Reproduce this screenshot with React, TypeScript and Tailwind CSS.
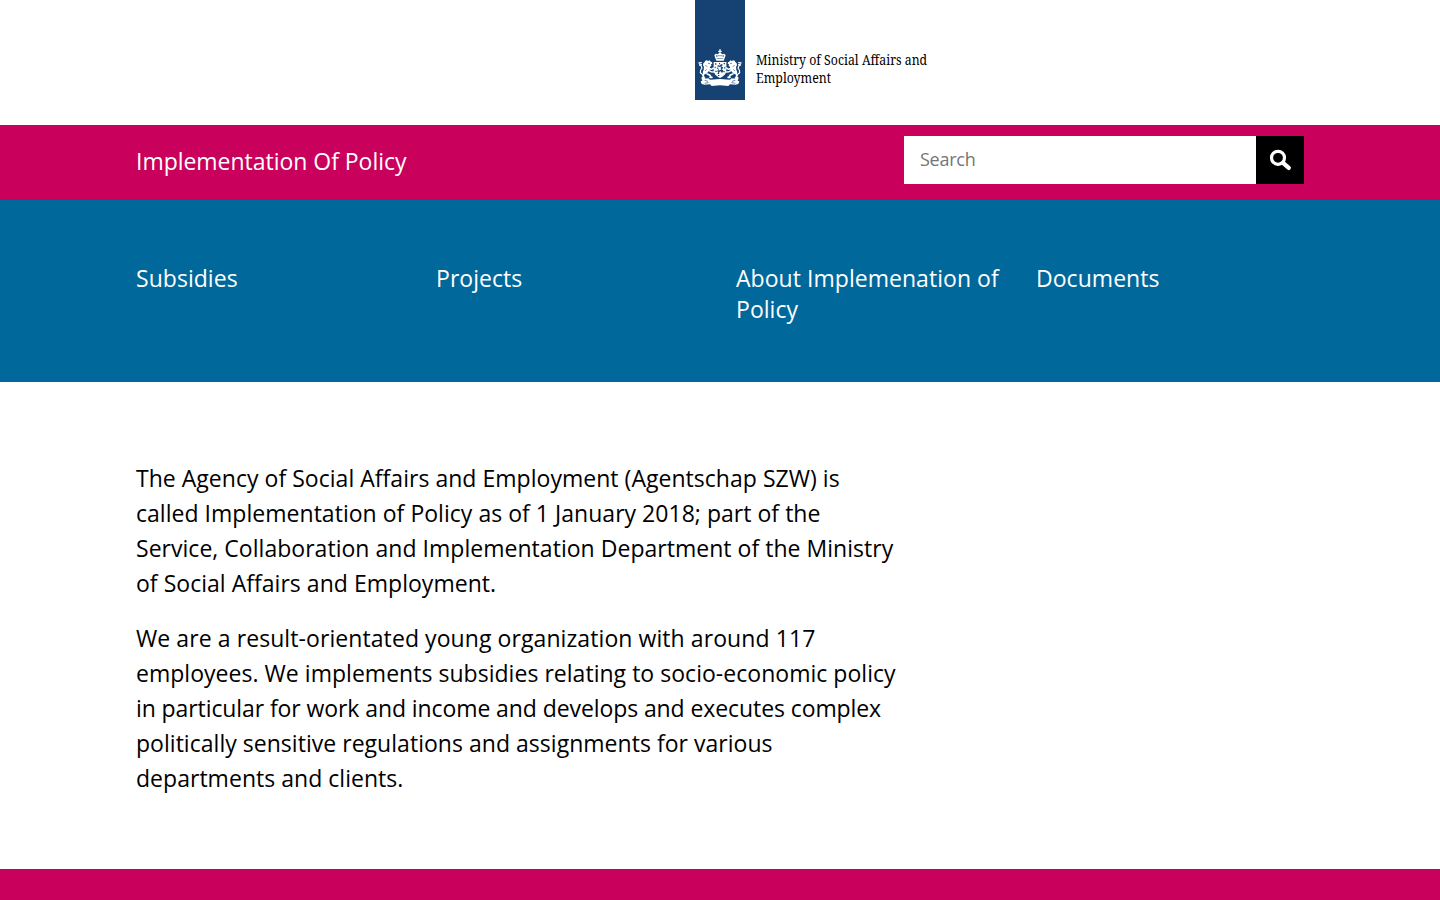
function CoatOfArms() {
  const lion = (
    <g>
      <path d="M50 61l5 2 4-2 3 4 4 2 1 4-4 2 1 5-5 3 2 5-5 7-6 8-9 2-3-6 3-8 1-8-3-5 1-6 4-4 2-4z" />
      <g fill="none" stroke="#fff" strokeLinecap="round" strokeLinejoin="round">
        <path d="M56 84l8 4 7-4M55 91l8 4 8 1" strokeWidth="4.5" />
        <path d="M52 102l8 4 3 6M60 112h6" strokeWidth="5" />
        <path d="M43 99l-4 7 3 8M37 114h6" strokeWidth="5.5" />
        <path d="M37 103l-6-5 1-8 4-6-3-7-3-4" strokeWidth="3.6" />
        <path d="M27 69l7-1M29 75l5-1" strokeWidth="4" />
      </g>
    </g>
  );
  return (
    <svg viewBox="15 0 150 186" className="h-[62px] w-[50px]" fill="#fff" aria-hidden="true">
      <path d="M88 28h4v4h3v4h-3v5h-4v-5h-3v-4h3z" />
      <path d="M73 45l5-4 5 2 4-4h6l4 4 5-2 5 4-2 7-4 10H79l-4-10z" />
      <g fill="#154273">
        <circle cx="80.5" cy="48" r="2.4" />
        <circle cx="86.8" cy="47" r="1.8" />
        <circle cx="93.2" cy="47" r="1.8" />
        <circle cx="99.5" cy="48" r="2.4" />
        <path d="M80 55h20v1.5H80z" />
      </g>
      {lion}
      <g transform="translate(180 0) scale(-1 1)">{lion}</g>
      <g fill="none" stroke="#154273" strokeWidth="1.8">
        <path d="M54 70l6 1M46 76l6 4M50 88l-5 5" />
        <path d="M126 70l-6 1M134 76l-6 4M130 88l5 5" />
      </g>
      <path d="M71 66h38v23c0 12-7 19-19 25-12-6-19-13-19-25z" />
      <g fill="#154273">
        <path d="M75 70h4v4h-4zM87 69h3v4h-3zM101 69h4v4h-4zM74 80h3v5h-3zM103 80h3v6h-3zM76 92h4v4h-4zM100 93h4v4h-4zM84 105h4v3h-4z" />
        <path d="M82 77l5-2 2 3 4-6 6 3-5 4 6 4-4 5 4 4-3 6-4-1-1-4-4 3-1 7-5-2 3-5-4-3 5-4-6-4 4-3z" />
      </g>
      <path d="M86 79l4 3 4-4-2 6 2 6-4-1-4 5 1-7-4-2z" />
      <path d="M35 117l20-2 5 4 30-2 30 2 5-4 20 2-2 5 5 2-3 8-9 2-16-1-5 5-25-2-25 2-5-5-16 1-9-2-3-8 5-2z" />
      <path d="M44 121l10 3M136 121l-10 3M44 130l12-2M136 130l-12-2" stroke="#154273" strokeWidth="1.8" />
    </svg>
  );
}

const intro = [
  "The Agency of Social Affairs and Employment (Agentschap SZW) is",
  "called Implementation of Policy as of 1 January 2018; part of the",
  "Service, Collaboration and Implementation Department of the Ministry",
  "of Social Affairs and Employment.",
];

export default function App() {
  return (
    <div className="flex h-[900px] flex-col overflow-hidden bg-white font-['Open_Sans',sans-serif] text-[23px] text-black">
      <header className="flex h-[125px] shrink-0 pl-[695px]">
        <div className="flex h-[100px] w-[50px] items-start bg-[#154273] pt-10">
          <CoatOfArms />
        </div>
        <p className="ml-[11px] origin-left scale-x-[0.88] pt-[51px] font-['Noto_Serif',serif] text-[14px] leading-[18px] whitespace-nowrap">
          Ministry of Social Affairs and
          <br />
          Employment
        </p>
      </header>

      <div className="flex h-[75px] shrink-0 items-start justify-between bg-[#ca005d] px-[136px] pt-[11px]">
        <a href="#" className="pt-[10px] leading-[31px] tracking-[-0.03px] text-white">Implementation Of Policy</a>
        <form className="flex h-12 w-[400px]">
          <input
            type="text"
            placeholder="Search"
            className="h-12 w-[352px] bg-white px-4 pb-[2px] text-[18px] tracking-[-0.25px] placeholder:text-[#757575]"
          />
          <button type="button" aria-label="Search" className="flex size-12 items-center justify-center bg-black">
            <svg viewBox="0 0 24 24" className="size-6" fill="none" stroke="#fff" strokeLinecap="round">
              <circle cx="10" cy="9.8" r="6.5" strokeWidth="3.2" />
              <path d="M15 14.8l5.8 5.1" strokeWidth="4.2" />
            </svg>
          </button>
        </form>
      </div>

      <nav className="grid h-[182px] shrink-0 grid-cols-[300px_300px_300px_268px] content-start bg-[#01689b] px-[136px] pt-[63px] leading-[31px] tracking-[0.04px] text-white">
        <a href="#">Subsidies</a>
        <a href="#">Projects</a>
        <a href="#">About Implemenation of<br />Policy</a>
        <a href="#">Documents</a>
      </nav>

      <main className="flex h-[487px] shrink-0 flex-col gap-5 px-[136px] pt-[79px] leading-[35px] tracking-[0.03px] whitespace-nowrap">
        <p>
          {intro.map((line) => (
            <span key={line} className="block">{line}</span>
          ))}
        </p>
        <p>
          <span className="block tracking-[0.08px]">We are a result-orientated young organization with around 117</span>
          <span className="block">employees. We implements subsidies relating to socio-economic policy</span>
          <span className="block tracking-[-0.09px]">in particular for work and income and develops and executes complex</span>
          <span className="block">politically sensitive regulations and assignments for various</span>
          <span className="block">departments and clients.</span>
        </p>
      </main>

      <footer className="h-[31px] shrink-0 bg-[#ca005d]" />
    </div>
  );
}
